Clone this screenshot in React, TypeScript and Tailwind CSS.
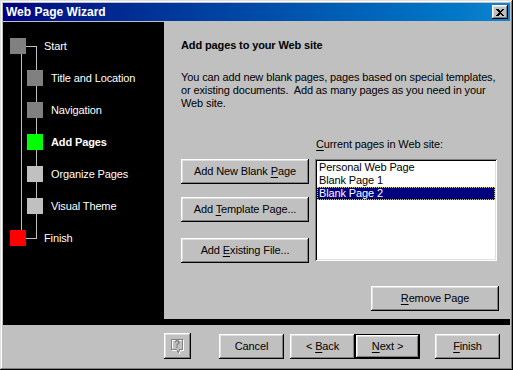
import React from 'react';

const bevel =
  'bg-[#c0c0c0] shadow-[inset_-1px_-1px_#000,inset_1px_1px_#fff,inset_-2px_-2px_#808080,inset_2px_2px_#dfdfdf]';

const U: React.FC<{ children: React.ReactNode }> = ({ children }) => <span className="underline underline-offset-2">{children}</span>;

const Btn: React.FC<{ className?: string; children: React.ReactNode }> = ({ className = '', children }) => (
  <button className={`${bevel} flex h-[25px] items-center justify-center text-[11px] leading-[13px] text-black ${className}`}>
    <span className="whitespace-pre">{children}</span>
  </button>
);

const steps = [
  { label: 'Start', color: 'bg-[#808080]', top: true },
  { label: 'Title and Location', color: 'bg-[#808080]' },
  { label: 'Navigation', color: 'bg-[#808080]' },
  { label: 'Add Pages', color: 'bg-[#00ff00]', bold: true },
  { label: 'Organize Pages', color: 'bg-[#c0c0c0]' },
  { label: 'Visual Theme', color: 'bg-[#c0c0c0]' },
  { label: 'Finish', color: 'bg-[#ff0000]', top: true },
];

// greyed-out help bubble
const HelpIcon = () => (
  <svg width="15" height="17" viewBox="0 0 15 17" shapeRendering="crispEdges">
    <path d="M2.5 2.5h11v10h-3l-1 3-2-3h-5z" fill="none" stroke="#fff" />
    <path d="M1.5 1.5h11v10h-3l-1 3-2-3h-5z" fill="none" stroke="#808080" />
    <text x="7" y="10" textAnchor="middle" fontSize="10" fontWeight="bold" fill="#808080" fontFamily="Liberation Sans, sans-serif">?</text>
  </svg>
);

const App: React.FC = () => {
  return (
    <div className="w-[513px] h-[370px] bg-[#c0c0c0] p-[3px] flex flex-col font-['Liberation_Sans',Arial,sans-serif] text-[11px] leading-[13px] tracking-[-0.12px] text-black shadow-[inset_-1px_-1px_#000,inset_1px_1px_#dfdfdf,inset_-2px_-2px_#808080,inset_2px_2px_#fff]">
      {/* Title bar */}
      <div className="h-[18px] flex items-center justify-between pl-[3px] pr-[2px] bg-gradient-to-r from-[#000080] to-[#1084d0]">
        <span className="text-white font-bold text-[12px] tracking-normal">Web Page Wizard</span>
        <div className={`${bevel} w-[16px] h-[14px] flex items-center justify-center`}>
          <svg width="8" height="7" viewBox="0 0 8 7" shapeRendering="crispEdges">
            <path d="M0 0h2l2 2 2-2h2v1L5 3.5 8 6v1H6L4 5 2 7H0V6l3-2.5L0 1z" fill="#000" />
          </svg>
        </div>
      </div>

      <div className="mt-[1px] flex h-[297px]">
        {/* Step list */}
        <div className="relative w-[161px] bg-black pt-[16px] text-white">
          <svg className="absolute left-0 top-0" width="161" height="297" shapeRendering="crispEdges">
            <g stroke="#c0c0c0" strokeWidth="1">
              <line x1="23" y1="24.5" x2="33.5" y2="24.5" />
              <line x1="33.5" y1="24" x2="33.5" y2="217" />
              <line x1="18.5" y1="32" x2="18.5" y2="208" />
              <line x1="23" y1="216.5" x2="33.5" y2="216.5" />
            </g>
          </svg>
          <div className="relative flex flex-col gap-[16px]">
            {steps.map((s) => (
              <div key={s.label} className={`flex h-[16px] items-center ${s.top ? 'pl-[7px]' : 'pl-[24px]'}`}>
                <div className={`w-[16px] h-[16px] ${s.color}`} />
                <span className={`${s.top ? 'ml-[18px]' : 'ml-[8px]'} whitespace-nowrap ${s.bold ? 'font-bold' : ''}`}>{s.label}</span>
              </div>
            ))}
          </div>
        </div>

        {/* Content */}
        <div className="flex-1 pl-[17px] pt-[17px] flex flex-col">
          <h2 className="font-bold text-[11px]">Add pages to your Web site</h2>
          <p className="mt-[19px] whitespace-pre">
            {'You can add new blank pages, pages based on special templates,\nor existing documents.  Add as many pages as you need in your\nWeb site.'}
          </p>
          <div className="mt-[28px] grid grid-cols-[128px_182px] gap-x-[6px]">
            <div />
            <div className="pl-[1px]"><U>C</U>urrent pages in Web site:</div>
            <div className="mt-[8px] flex flex-col">
              <Btn className="w-[128px]">Add New Blank <U>P</U>age</Btn>
              <Btn className="w-[128px] mt-[13px]">Add <U>T</U>emplate Page...</Btn>
              <Btn className="w-[128px] mt-[16px]">Add <U>E</U>xisting File...</Btn>
            </div>
            <div className="mt-[8px] h-[102px] bg-white p-[2px] shadow-[inset_1px_1px_#808080,inset_-1px_-1px_#fff,inset_2px_2px_#000,inset_-2px_-2px_#dfdfdf]">
              <div className="pl-[2px] h-[13px]">Personal Web Page</div>
              <div className="pl-[2px] h-[13px]">Blank Page 1</div>
              <div className="pl-[2px] h-[13px] bg-[#000080] text-white outline-1 outline-dotted outline-[#c8c860] -outline-offset-1">Blank Page 2</div>
            </div>
          </div>
          <div className="mt-[23px] flex justify-end pr-[11px]">
            <Btn className="w-[128px]"><U>R</U>emove Page</Btn>
          </div>
        </div>
      </div>

      <div className="h-[6px] bg-black" />

      {/* Bottom buttons */}
      <div className="flex pt-[9px]">
        <button className={`${bevel} ml-[161px] w-[27px] h-[26px] -mt-[1px] flex items-center justify-center`}>
          <HelpIcon />
        </button>
        <Btn className="ml-[28px] w-[65px]">Cancel</Btn>
        <Btn className="ml-[6px] w-[65px]">&lt; <U>B</U>ack</Btn>
        <Btn className="w-[65px] border border-black"><U>N</U>ext &gt;</Btn>
        <Btn className="ml-[15px] w-[65px]"><U>F</U>inish</Btn>
      </div>
    </div>
  );
};

export default App;
